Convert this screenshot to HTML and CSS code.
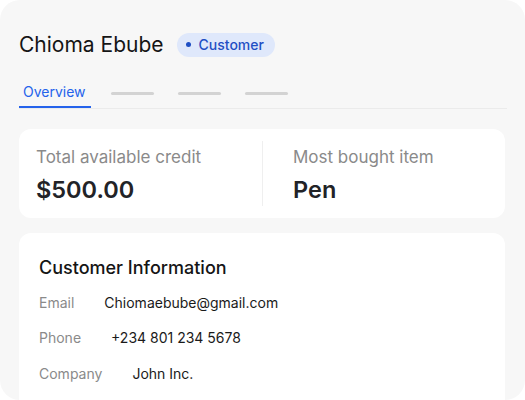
FILE: index.html
```html
<!DOCTYPE html>
<html>
<head>
<meta charset="utf-8">
<link rel="stylesheet" href="styles.css">
</head>
<body>
<div class="panel">
  <div class="header">
    <h1 class="name">Chioma Ebube</h1>
    <span class="badge"><span class="dot"></span>Customer</span>
  </div>
  <div class="tabs">
    <div class="tab active">Overview</div>
    <div class="tab"><span class="bar"></span></div>
    <div class="tab"><span class="bar"></span></div>
    <div class="tab"><span class="bar"></span></div>
  </div>
  <div class="card stats">
    <div class="stat first">
      <div class="stat-label">Total available credit</div>
      <div class="stat-value">$500.00</div>
    </div>
    <div class="divider"></div>
    <div class="stat second">
      <div class="stat-label">Most bought item</div>
      <div class="stat-value">Pen</div>
    </div>
  </div>
  <div class="card info">
    <h2 class="info-title">Customer Information</h2>
    <div class="rows">
      <div class="row"><span class="label">Email</span><span class="value">Chiomaebube@gmail.com</span></div>
      <div class="row"><span class="label">Phone</span><span class="value">+234 801 234 5678</span></div>
      <div class="row"><span class="label">Company</span><span class="value">John Inc.</span></div>
    </div>
  </div>
</div>
</body>
</html>
```
FILE: styles.css
```css
* { box-sizing: border-box; }
html, body { margin: 0; padding: 0; background: #ffffff; }
body { font-family: Inter, "Noto Sans", sans-serif; }

.panel {
  width: 525px;
  height: 400px;
  background: #f7f7f7;
  border-radius: 20px;
  overflow: hidden;
  padding: 31px 20px 0 19px;
}

.header {
  display: flex;
  align-items: center;
  gap: 13px;
  height: 27px;
}
.name {
  margin: 0;
  font-size: 21px;
  line-height: 27px;
  font-weight: 400;
  color: #151515;
}
.badge {
  display: inline-flex;
  align-items: center;
  gap: 8px;
  height: 24px;
  padding: 0 11px 0 9px;
  border-radius: 12px;
  background: #dfe8fb;
  color: #1f4fc4;
  font-size: 14px;
  font-weight: 500;
}
.dot {
  width: 5px;
  height: 5px;
  border-radius: 50%;
  background: #1f4fc4;
}

.tabs {
  display: flex;
  gap: 16px;
  margin-top: 19px;
  margin-right: -2px;
  border-bottom: 1px solid #ebebeb;
}
.tab {
  padding: 6px 4px;
  font-size: 14px;
  line-height: 17px;
  color: #6b6b6b;
  border-bottom: 2px solid transparent;
  display: flex;
  align-items: center;
}
.tab.active {
  color: #2563eb;
  border-bottom-color: #2563eb;
  padding-right: 5px;
}
.bar {
  display: block;
  width: 43px;
  height: 3px;
  border-radius: 2px;
  background: #d3d3d3;
  margin-top: 3px;
}

.card {
  background: #ffffff;
  border-radius: 12px;
}
.stats {
  margin-top: 20px;
  padding: 12px 0;
  display: flex;
}
.stat {
  padding-top: 6px;
  padding-bottom: 2px;
  display: flex;
  flex-direction: column;
  gap: 8px;
}
.stat.first { flex: 0 0 243px; padding-left: 17px; }
.stat.second { flex: 1; padding-left: 30px; }
.divider {
  width: 1px;
  background: #efefef;
}
.stat-label {
  font-size: 17px;
  line-height: 20px;
  color: #8a8a8a;
}
.stat-value {
  font-size: 23.5px;
  line-height: 29px;
  font-weight: 600;
  color: #222327;
}

.info {
  margin-top: 15px;
  height: 200px;
  padding: 24px 20px;
}
.info-title {
  margin: 0 0 15px;
  font-size: 18px;
  line-height: 22px;
  font-weight: 500;
  color: #151515;
}
.rows {
  display: flex;
  flex-direction: column;
  gap: 18.3px;
}
.row {
  display: flex;
  gap: 30px;
  font-size: 14px;
  line-height: 17px;
}
.label { color: #8a8a8a; }
.value { color: #1a1a1a; }
```
